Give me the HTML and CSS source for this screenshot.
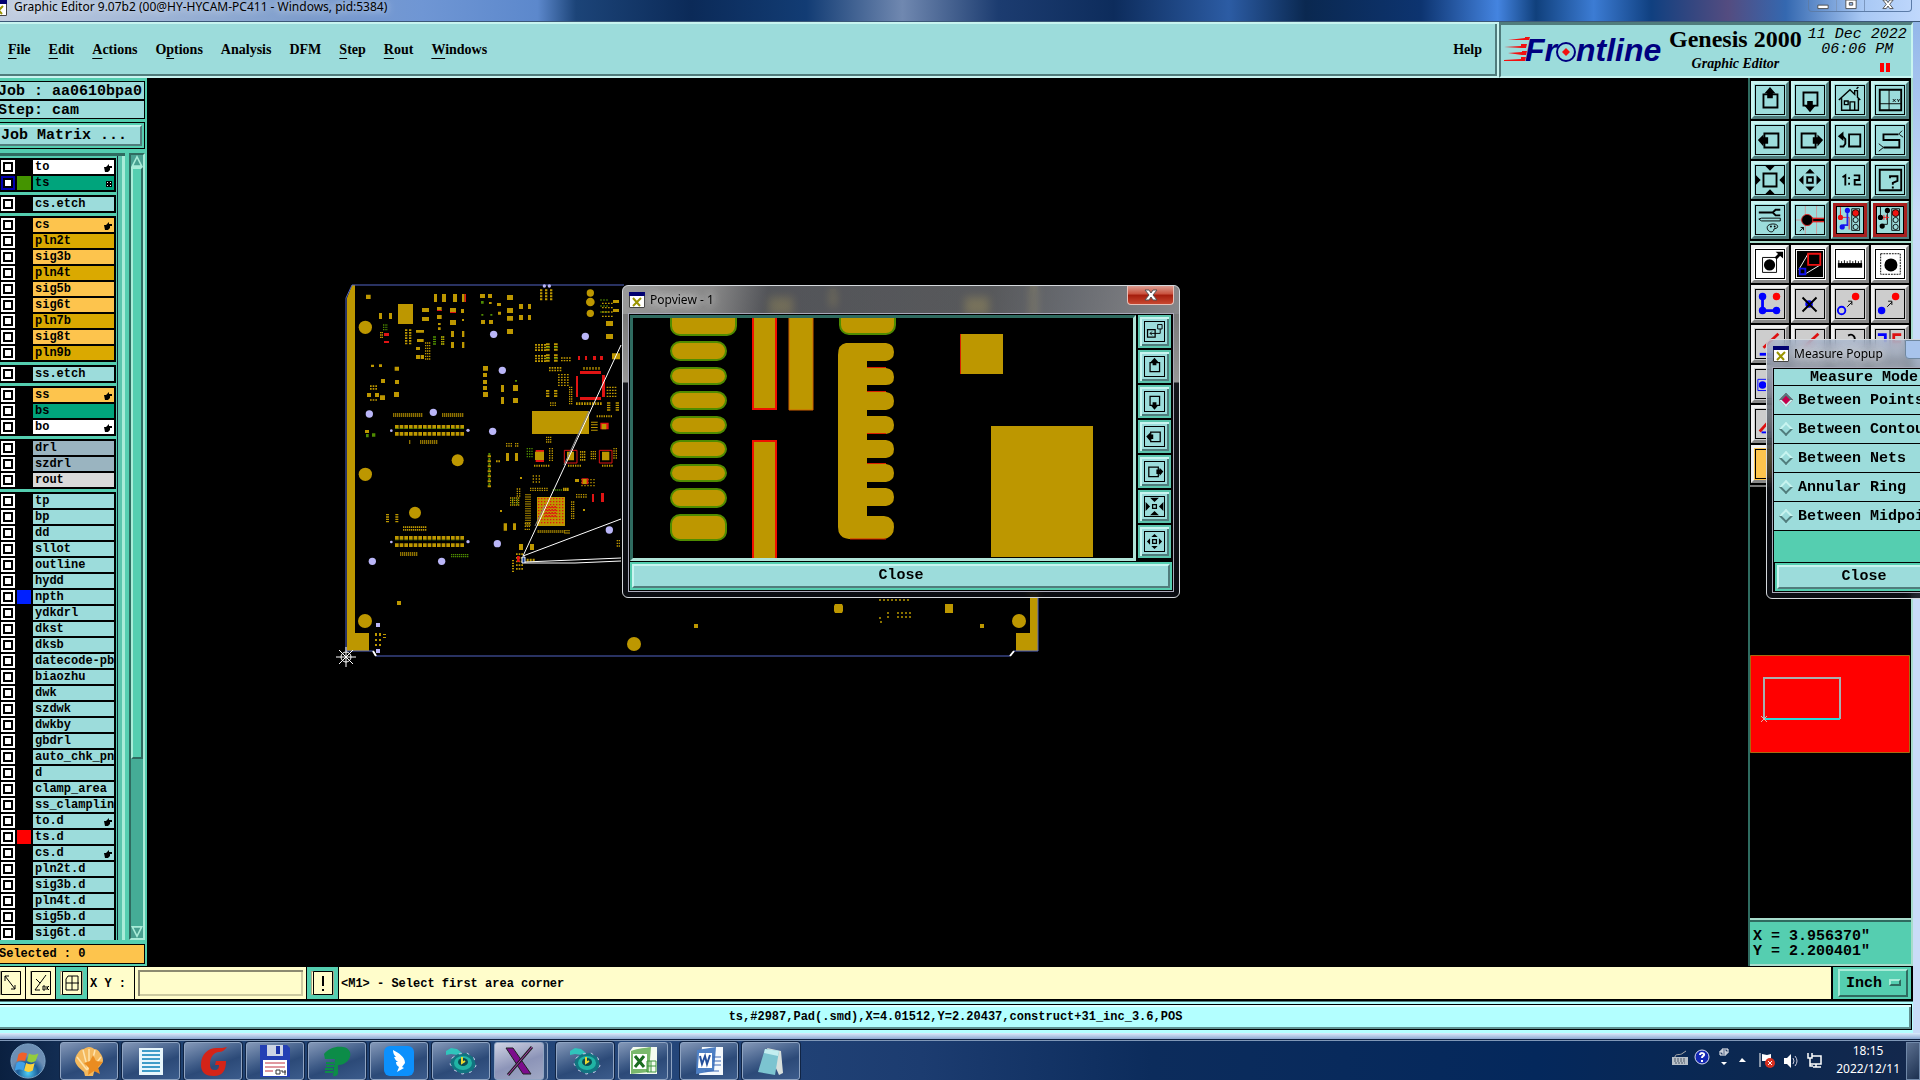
FILE: index.html
```html
<!DOCTYPE html>
<html lang="en">
<head>
    <meta charset="UTF-8">
    <meta name="viewport" content="width=device-width, initial-scale=1.0">
    <title>Graphic Editor</title>
    <link rel="stylesheet" href="styles.css">
</head>
<body>
    <!-- Shared icons -->
    <svg class="sprites" aria-hidden="true">
        <symbol id="i-up" viewBox="0 0 30 30">
            <path d="M8 9h15v14H8z" fill="none" stroke="#000" stroke-width="2"/>
            <path d="M15 1l6 7h-3v5h-6V8H9z"/>
        </symbol>
        <symbol id="i-down" viewBox="0 0 30 30">
            <path d="M8 7h15v14H8z" fill="none" stroke="#000" stroke-width="2"/>
            <path d="M15 28l6-7h-3v-5h-6v5H9z"/>
        </symbol>
        <symbol id="i-left" viewBox="0 0 30 30">
            <path d="M9 8h15v15H9z" fill="none" stroke="#000" stroke-width="2"/>
            <path d="M2 15l6-6v3h5v7H8v3z"/>
        </symbol>
        <symbol id="i-right" viewBox="0 0 30 30">
            <path d="M6 8h15v15H6z" fill="none" stroke="#000" stroke-width="2"/>
            <path d="M29 15l-6-6v3h-5v7h5v3z"/>
        </symbol>
        <symbol id="i-zoomin" viewBox="0 0 30 30">
            <path d="M8 8h14v14H8z" fill="none" stroke="#000" stroke-width="2"/>
            <path d="M10 0h10l-5 5zM10 30h10l-5-5zM0 10v10l5-5zM30 10v10l-5-5z"/>
        </symbol>
        <symbol id="i-zoomout" viewBox="0 0 30 30">
            <path d="M12 12h6v6h-6z" fill="none" stroke="#000" stroke-width="2"/>
            <path d="M10 8h10l-5-5zM10 22h10l-5 5zM8 10v10l-5-5zM22 10v10l5-5z"/>
        </symbol>
        <symbol id="i-xwin" viewBox="0 0 16 16">
            <path d="M0 0h16v16H0z" fill="#fff"/>
            <path d="M0 0h16v4H0z" fill="#000070"/>
            <path d="M.5 4v11.500h15V4" fill="none" stroke="#444"/>
            <path d="M4 6l7 8M12 6l-8 8" stroke="#9a9400" stroke-width="2"/>
        </symbol>
        <symbol id="i-genesis" viewBox="0 0 32 32">
            <path d="M1 6l5-3 6 1 5 4-4 2-7-1-5 1z" fill="#30c4bc"/>
            <path d="M7 13l6-4 9-1 7 5 2 8-5 6-9 2-8-4-4-6z" fill="#127480" stroke="#c8c8e8" stroke-dasharray="3 5"/>
            <ellipse cx="18" cy="18" rx="9" ry="7" fill="#20b4a4"/>
            <ellipse cx="18" cy="17" rx="5" ry="4" fill="#0a4a50"/>
            <path d="M17 12v6l3-2" stroke="#e8d830" stroke-width="2" fill="none"/>
        </symbol>
    </svg>

    <div class="desktop">
        <header class="titlebar">
            <svg class="title-icon"><use href="#i-xwin"/></svg>
            <span class="title-text">Graphic Editor 9.07b2 (00@HY-HYCAM-PC411 - Windows, pid:5384)</span>
            <div class="window-buttons">
                <button aria-label="Minimize"><svg viewBox="0 0 14 14"><path d="M1 6h12v4H1z"/></svg></button>
                <button aria-label="Maximize"><svg viewBox="0 0 14 14"><path d="M1 0h12v10H1zM5 3v3h4V3z" fill-rule="evenodd"/></svg></button>
                <button aria-label="Close"><svg viewBox="0 0 14 14"><path d="M1 0h4l2 3 2-3h4L9 5l4 5H9L7 7l-2 3H1l4-5z"/></svg></button>
            </div>
        </header>

        <div class="app">
            <div class="top">
                <nav class="menubar">
                    <button><u>F</u>ile</button>
                    <button><u>E</u>dit</button>
                    <button><u>A</u>ctions</button>
                    <button>O<u>p</u>tions</button>
                    <button>Analysis</button>
                    <button>DFM</button>
                    <button><u>S</u>tep</button>
                    <button><u>R</u>out</button>
                    <button><u>W</u>indows</button>
                    <button class="help">Help</button>
                </nav>
                <div class="brand">
                    <svg class="logo" viewBox="0 -8 162 44">
                        <path d="M4 3l17-2v-1h5l-1 3H20zM0 10l17-1v-2h6l-1 4H18zM4 16l14-1v-1h5l-1 4h-4zM0 23l17-1v-2h5l-1 4H0z" fill="#f21010"/>
                        <text class="logo-text" x="21" y="24">Fr<tspan x="72">ntline</tspan></text>
                        <circle cx="62" cy="15" r="9" fill="#9cdcdb" stroke="#000080" stroke-width="2"/>
                        <path d="M62 11l4 4-4 4-4-4z" fill="#f21010"/>
                    </svg>
                    <div class="product">
                        <div class="product-name">Genesis 2000</div>
                        <div class="product-sub">Graphic Editor</div>
                    </div>
                    <div class="clock">
                        <span>11 Dec 2022</span>
                        <span>06:06 PM</span>
                        <i class="pause"></i>
                    </div>
                </div>
            </div>

            <div class="main">
                <aside class="sidebar">
                    <div class="job-line">Job : aa0610bpa0</div>
                    <div class="job-line">Step: cam</div>
                    <div class="matrix"><button class="matrix-button">Job Matrix ...</button></div>
                    <div class="layers">
                        <div class="layer-list" id="layerList"></div>
                        <div class="scrollbar">
                            <button class="scroll-arrow up" aria-label="Scroll up"></button>
                            <div class="trough"><div class="thumb"></div></div>
                            <button class="scroll-arrow down" aria-label="Scroll down"></button>
                        </div>
                    </div>
                    <div class="selected">Selected : 0</div>
                </aside>

                <main class="canvas">
                    <svg class="board" viewBox="147 78 1601 888" preserveAspectRatio="xMinYMin meet">
                        <!-- Board frame -->
                        <path d="M347 651V298l5-13h3v348h14v18z" fill="#bd9700"/>
                        <path d="M1030 285h8v366h-22v-18h14z" fill="#bd9700"/>
                        <path d="M346 651V298l6-13h272M346 651h27l3 5h634l4-5h24V285" fill="none" stroke="#5264c4"/>
                        <path d="M373 651l3 5M1010 656l4-5" stroke="#fff" stroke-width="2"/>
                        <g fill="#bd9700">
                            <circle cx="365" cy="621" r="7"/><circle cx="1019" cy="621" r="7"/><circle cx="634" cy="644" r="7"/>
                            <path d="M835 604h7l1 2v5l-1 2h-7l-1-2v-5zM945 604h8v9h-8zM397 601h4v4h-4zM694 624h4v4h-4zM980 624h4v4h-4z"/>
                            <path d="M375 633h2v3h-2zM379 633h2v3h-2zM375 639h2v2h-2zM379 639h2v2h-2zM375 644h2v2h-2zM379 644h2v2h-2zM383 634h3v1h-3zM383 637h3v1h-3z"/>
                            <path d="M769 297h24v18h-24zM965 297h24v18h-24zM830 289h6v18h-6z"/>
                        </g>
                        <path d="M879 600h31M887 613h4M897 613h14M887 617h4M897 617h14M879 618h4M880 622h3" stroke="#8a7200" stroke-width="2" stroke-dasharray="2 2"/>
                        <path d="M376 623h4v4h-4zM376 649h4v4h-4z" fill="#bab6f8"/>
                        <!-- Components, in thirds of a pixel -->
                        <g id="boardPads" transform="translate(340 270) scale(.33333)"></g>
                        <!-- Nets -->
                        <path d="M621 345L523 556l98-37M525 562l96-4M525 563h50l46-2" fill="none" stroke="#fff"/>
                        <path d="M589 411l-25 54M545 505l-10 21" stroke="#888"/>
                        <path d="M522 557h3v6h-3z" fill="#123c90" stroke="#fff"/>
                        <!-- Origin -->
                        <g fill="none" stroke="#fff"><circle cx="346" cy="657" r="5"/><path d="M336 657h20M346 647v20M339 650l14 14M353 650l-14 14"/></g>
                    </svg>
                </main>

                <aside class="tools">
                    <div class="tool-grid">
                        <button aria-label="Pan up"><svg><use href="#i-up"/></svg></button>
                        <button aria-label="Pan down"><svg><use href="#i-down"/></svg></button>
                        <button aria-label="Home"><svg viewBox="0 0 30 30"><path d="M3 15l12-11 5 5V5h3v7l3 3M6 13v13h18V13M9 16h4v4H9zM15 26v-9h5v9M22 3l2-2" fill="none" stroke="#000" stroke-width="1.500"/></svg></button>
                        <button aria-label="Coordinates view"><svg viewBox="0 0 30 30"><path d="M4 4h23v22H4z" fill="none" stroke="#000" stroke-width="2"/><path d="M14 4v22M4 19h23M18 14l3 3M21 14l-3 3M23 14l1 2 2-2M24 16v1" fill="none" stroke="#000"/></svg></button>
                        <button aria-label="Pan left"><svg><use href="#i-left"/></svg></button>
                        <button aria-label="Pan right"><svg><use href="#i-right"/></svg></button>
                        <button aria-label="Previous view"><svg viewBox="0 0 30 30"><path d="M14 9h12v13H14z" fill="none" stroke="#000" stroke-width="2"/><path d="M4 22h4l2-3v-5l-3-3" fill="none" stroke="#000" stroke-width="2"/><path d="M2 11l6-5v10z"/></svg></button>
                        <button aria-label="Serpentine"><svg viewBox="0 0 30 30"><path d="M24 9H8v6h17v8H8" fill="none" stroke="#000" stroke-width="2"/><path d="M24 9l4-4M25 9l4 3M8 23l-5-4M8 23l-5 4" fill="none" stroke="#000"/></svg></button>
                        <button aria-label="Zoom in"><svg><use href="#i-zoomin"/></svg></button>
                        <button aria-label="Zoom out"><svg><use href="#i-zoomout"/></svg></button>
                        <button aria-label="Scale 1:2"><svg viewBox="0 0 30 30"><path d="M7 12l3-2v11M14 12v2M14 18v2M19 10h6v5h-5v5h7" fill="none" stroke="#000" stroke-width="2"/></svg></button>
                        <button aria-label="Help on item"><svg viewBox="0 0 30 30"><path d="M4 4h23v22H4z" fill="none" stroke="#000" stroke-width="2"/><path d="M15 13v-2h8v5l-5 2v2M18 22v2" fill="none" stroke="#000" stroke-width="2"/></svg></button>
                        <button aria-label="Setup"><svg viewBox="0 0 30 30"><path d="M3 7h15M18 7l3-3h5M18 7l3 3h5" fill="none" stroke="#000" stroke-width="2"/><path d="M3 14l3-1h20v3H6zM12 23c0-5 13-5 11 0-2 2-4 0-4 3-1 3-7 2-7-3z" fill="none" stroke="#000"/><circle cx="16" cy="22" r="1"/><circle cx="20" cy="22" r="1"/></svg></button>
                        <button aria-label="Snap"><svg viewBox="0 0 30 30"><path d="M10 0v30M22 0v30M0 15h30" stroke="#c99" fill="none"/><path d="M12 15h18" stroke="#d22" stroke-width="5"/><path d="M12 15h18" stroke="#000" stroke-width="2"/><circle cx="12" cy="15" r="6" stroke="#d22"/><path d="M4 27l4-4M5 23h3v3" stroke="#000" fill="none"/></svg></button>
                        <button class="alert" aria-label="Net check"><svg viewBox="0 0 30 30"><path d="M4 0v12h10v14M4 12V5" stroke="#e22" fill="none"/><path d="M12 5v16H7" stroke="#22e" stroke-width="2" fill="none"/><circle cx="4" cy="12" r="3" fill="#e11"/><circle cx="12" cy="4" r="3" fill="#11e"/><circle cx="6" cy="23" r="3" fill="#11e"/><path d="M17 2h9v25h-9z" fill="none" stroke="#000"/><circle cx="21.500" cy="7" r="4" fill="#e11" stroke="#000"/><circle cx="21.500" cy="15" r="3" fill="none" stroke="#000"/><circle cx="21.500" cy="23" r="3" fill="none" stroke="#000"/></svg></button>
                        <button class="alert" aria-label="Distance check"><svg viewBox="0 0 30 30"><path d="M4 0v12M12 4v16H7" stroke="#000" fill="none"/><path d="M6 12h8M8 9v6M11 9v6" stroke="#e22" fill="none"/><circle cx="4" cy="12" r="3"/><circle cx="12" cy="4" r="3"/><circle cx="6" cy="22" r="3"/><path d="M17 2h9v25h-9z" fill="none" stroke="#000"/><circle cx="21.500" cy="7" r="4" fill="#e11" stroke="#000"/><circle cx="21.500" cy="15" r="3" fill="none" stroke="#000"/><circle cx="21.500" cy="23" r="3" fill="none" stroke="#000"/></svg></button>
                    </div>
                    <div class="tool-grid gray">
                        <button class="on" aria-label="Select feature"><svg viewBox="0 0 30 30"><path d="M7 8h15v16H7z" fill="none" stroke="#000"/><circle cx="14.500" cy="16" r="6"/><path d="M21 9l5-5" stroke="#000" stroke-width="3"/><path d="M21 2h8v7z"/></svg></button>
                        <button class="on" aria-label="Measure"><svg viewBox="0 0 30 30"><path d="M1 1h28v28H1z"/><path d="M13 4L3 21M26 16l-15 9" stroke="#fff"/><path d="M13 4h13v12H13z" fill="none" stroke="#e11" stroke-width="2"/><path d="M4 20h6v6H4z" fill="none" stroke="#11e" stroke-width="2"/></svg></button>
                        <button class="on" aria-label="Ruler"><svg viewBox="0 0 30 30"><path d="M2 14h26v5H2z"/><path d="M3 11v4M6 12v3M9 11v4M12 12v3M15 11v4M18 12v3M21 11v4M24 12v3M27 11v4" stroke="#000"/></svg></button>
                        <button class="on" aria-label="Area select"><svg viewBox="0 0 30 30"><path d="M5 4h21v22H5z" fill="none" stroke="#000" stroke-dasharray="2 1"/><circle cx="16" cy="16" r="7"/></svg></button>
                        <button aria-label="Chain"><svg viewBox="0 0 30 30"><path d="M7 7v15h15" fill="none" stroke="#00f" stroke-width="3"/><g fill="#00f"><circle cx="7" cy="7" r="4"/><circle cx="7" cy="22" r="4"/><circle cx="22" cy="22" r="4"/></g><circle cx="22" cy="7" r="4" fill="#f00"/></svg></button>
                        <button aria-label="Delete"><svg viewBox="0 0 30 30"><circle cx="14" cy="15" r="4" fill="#00f"/><path d="M7 8l15 15M22 8L7 23" stroke="#000" stroke-width="2"/></svg></button>
                        <button aria-label="Copy point"><svg viewBox="0 0 30 30"><circle cx="6" cy="22" r="4" fill="none" stroke="#00f" stroke-width="2"/><circle cx="21" cy="7" r="4" fill="#f00"/><path d="M12 18l5-5M13 12h4v4" fill="none" stroke="#000"/></svg></button>
                        <button aria-label="Move point"><svg viewBox="0 0 30 30"><circle cx="6" cy="22" r="4" fill="#00f"/><circle cx="21" cy="7" r="4" fill="#f00"/><path d="M12 18l5-5M13 12h4v4" fill="none" stroke="#000"/></svg></button>
                        <button aria-label="Line"><svg viewBox="0 0 30 30"><path d="M8 19L24 4" stroke="#d11" stroke-width="3"/><path d="M4 26h16" stroke="#00f" stroke-width="3"/></svg></button>
                        <button aria-label="Angle"><svg viewBox="0 0 30 30"><path d="M8 19L24 4" stroke="#d11" stroke-width="3"/></svg></button>
                        <button aria-label="Arc"><svg viewBox="0 0 30 30"><path d="M13 6c5-3 9 2 6 7" fill="none" stroke="#000" stroke-width="2"/></svg></button>
                        <button aria-label="Mirror"><svg viewBox="0 0 30 30"><path d="M2 5h8v8" fill="none" stroke="#00f" stroke-width="3"/><path d="M27 5h-8v8h8" fill="none" stroke="#d11" stroke-width="3"/><path d="M15 0v30" stroke="#000"/></svg></button>
                        <button aria-label="Pad"><svg viewBox="0 0 30 30"><path d="M2 10h12v12H2z" fill="none" stroke="#00f"/><circle cx="7" cy="16" r="4" fill="#00f"/></svg></button>
                        <button aria-label="Surface"></button>
                        <button aria-label="Text"></button>
                        <button aria-label="Contour"></button>
                        <button aria-label="Edge"><svg viewBox="0 0 30 30"><path d="M4 23l8-9" stroke="#d11" stroke-width="3"/><path d="M6 24h10" stroke="#00f" stroke-width="2"/></svg></button>
                        <button aria-label="Fill"></button>
                        <button aria-label="Polygon"></button>
                        <button aria-label="Break"></button>
                        <button class="amber" aria-label="Mode A"><svg viewBox="0 0 30 30"></svg></button>
                        <button class="amber" aria-label="Mode B"></button>
                        <button class="amber" aria-label="Mode C"></button>
                        <button class="amber" aria-label="Mode D"></button>
                    </div>
                    <div class="overview">
                        <svg class="overview-map" viewBox="0 0 160 98">
                            <path d="M.5.500h159v97H.5z" fill="#f00" stroke="#a86a10"/>
                            <path d="M14 64V23h76v41" fill="none" stroke="#a8b0b0" stroke-width="2"/>
                            <path d="M14 64h76" stroke="#30d8d8" stroke-width="2"/>
                            <path d="M11 61l6 6M17 61l-6 6" stroke="#e0b8b0"/>
                        </svg>
                    </div>
                    <div class="coords"><div>X = 3.956370"</div><div>Y = 2.200401"</div></div>
                </aside>
            </div>

            <div class="command">
                <button class="cmd-button" aria-label="Diagonal"><svg viewBox="0 0 20 24"><path d="M.5.500h19v23H.5z"/><path d="M4 5l10 13M4 10V5h4M14 14v4h-4"/></svg></button>
                <button class="cmd-button" aria-label="Angle"><svg viewBox="0 0 20 24"><path d="M.5.500h19v23H.5z"/><path d="M15 4L4 19h5M5 8l4 4M12 15h2v4h-2zM16 15v4M18 15l-2 2 2 2"/></svg></button>
                <button class="cmd-button teal" aria-label="Grid"><svg viewBox="0 0 20 24"><path d="M.5.500h19v23H.5z"/><path d="M4 12h13M10 5v14M6 5h10v14H4V8z"/></svg></button>
                <label class="xy-label" for="xy">X Y :</label>
                <input class="xy-input" id="xy" type="text">
                <button class="cmd-button teal" aria-label="Execute"><svg viewBox="0 0 20 24"><path d="M.5.500h19v23H.5z"/><path d="M10 5v10M10 18v2" stroke-width="2"/></svg></button>
                <div class="message">&lt;M1&gt; - Select first area corner</div>
                <div class="unit">
                    <select aria-label="Unit"><option>Inch</option><option>MM</option></select>
                    <i class="unit-mark"></i>
                </div>
            </div>
            <div class="status"><div class="status-text">ts,#2987,Pad(.smd),X=4.01512,Y=2.20437,construct+31_inc_3.6,POS</div></div>
        </div>
        <div class="frame-bottom"></div>

        <footer class="taskbar">
            <button class="start" aria-label="Start">
                <svg viewBox="0 0 40 40">
                    <defs><radialGradient id="orb" cy=".85"><stop offset="0" stop-color="#4fd0f8"/><stop offset=".6" stop-color="#1c5c98"/><stop offset="1" stop-color="#6d8fb4"/></radialGradient></defs>
                    <circle cx="20" cy="20" r="18" fill="url(#orb)" stroke="#7fa6c8"/>
                    <path d="M10 13c3-3 6-2 9-1l-2 8c-3-1-6-1-9 1z" fill="#f0602a"/>
                    <path d="M21 12c3 2 6 2 10 0l-3 8c-3 2-6 2-9 0z" fill="#94cc3c"/>
                    <path d="M8 22c3-2 6-1 9 0l-2 8c-3-2-6-1-9 0z" fill="#3fa0e8"/>
                    <path d="M18 22c3 2 6 2 9 0l-2 8c-3 2-6 2-9 0z" fill="#fcd03c"/>
                </svg>
            </button>
            <button class="task" aria-label="Shell"><svg viewBox="0 0 32 32"><path d="M16 2c3 0 4 1 5 2 3 0 5 2 6 4 2 2 3 5 3 8-1 4-6 8-9 11l-1 4h-8l-1-4c-4-3-8-7-9-11 0-3 1-6 3-8 1-2 3-4 6-4 1-1 3-2 5-2z" fill="#f4b95e"/><path d="M16 4v20M10 5l5 20M22 5l-5 20M4 12l10 13M28 12L18 25" stroke="#fde3ae" stroke-width="1.500"/><path d="M20 10l3 6 7 1-5 5 2 7-6-3-6 4 1-7-5-5 6-2z" fill="#ea8c20"/></svg></button>
            <button class="task" aria-label="Document"><svg viewBox="0 0 32 32"><path d="M4 3h24v27H4z" fill="#e8f6fc"/><path d="M7 6h18M7 10h18M7 14h18M7 18h18M7 22h18M7 26h18" stroke="#3f9cc8" stroke-width="2"/></svg></button>
            <button class="task" aria-label="G tool"><svg viewBox="0 0 32 32"><path d="M30 2c-2 3-5 5-8 5-5 0-9 5-9 12 0 5 2 6 5 6 3 0 4-2 4-5h-4l1-4h10c0 10-4 15-12 15S4 28 4 20C4 9 11 3 20 3c4 0 7 0 10-1z" fill="#d42418"/></svg></button>
            <button class="task" aria-label="Save"><svg viewBox="0 0 32 32"><path d="M1 0h27l3 3v29H1z" fill="#2440b4"/><path d="M8 0h16v11H8z" fill="#ccd4e4"/><path d="M17 1h4v8h-4z" fill="#1c34a8"/><path d="M4 15h24v16H4z" fill="#fff"/><path d="M6 18h20M6 22h20M6 26h8" stroke="#c03040"/><path d="M17 25h4v4h-4zM23 25v2h4M26 25v5" fill="none" stroke="#333"/></svg></button>
            <button class="task" aria-label="P tool"><svg viewBox="0 0 32 32"><path d="M3 9c5-6 12-8 19-7 7 1 9 7 6 12-3 5-8 6-11 6v9q-2 3-5 2l2-17H4z" fill="#0c8c48"/><path d="M5 18h8M5 21h8M4 24h8M4 27h8" stroke="#0c8c48" stroke-width="2"/></svg></button>
            <button class="task" aria-label="Bird"><svg viewBox="0 0 32 32"><rect x="1" y="1" width="30" height="30" rx="6" fill="#0c90fc"/><path d="M10 5c6 3 12 7 12 13l-3 4 2 1-7 4 2-5c-2-1-3-3-3-5h2c-2-1-3-3-4-5h2c-2-2-3-4-3-7z" fill="#fff"/></svg></button>
            <button class="task" aria-label="Genesis"><svg><use href="#i-genesis"/></svg></button>
            <button class="task active stack" aria-label="X server"><svg viewBox="0 0 32 32"><path d="M3 3h7l18 26h-8z" fill="#7c0c8c" stroke="#222"/><path d="M29 2L5 30" stroke="#222" stroke-width="3"/><path d="M29 2L5 30" stroke="#a838b0"/></svg></button>
            <button class="task" aria-label="Genesis 2"><svg><use href="#i-genesis"/></svg></button>
            <button class="task stack" aria-label="Spreadsheet"><svg viewBox="0 0 32 32"><path d="M6 2h24v27H3V6z" fill="#f4fbf0"/><path d="M4 6c8-3 14-3 20-4l-2 25-18 2z" fill="#7ab86c"/><path d="M6 9h14v15H6z" fill="#fff"/><path d="M8 11l9 11M17 11L8 22" stroke="#1c6c20" stroke-width="3"/><path d="M20 16h9v11h-9zM20 21h9M24 16v11" fill="none" stroke="#3c943c"/></svg></button>
            <button class="task" aria-label="Word"><svg viewBox="0 0 32 32"><path d="M9 2h21v28H6z" fill="#f4f8fc"/><path d="M4 5l19-3-2 24-18 3z" fill="#4d7fc4"/><path d="M6 8h13v15H5z" fill="#fff"/><path d="M7 11l2 8 3-8 2 8 3-9" fill="none" stroke="#24509c" stroke-width="2"/><path d="M20 12h8M20 16h8M20 20h8M12 26h14" stroke="#3c68b4"/></svg></button>
            <button class="task" aria-label="Notes"><svg viewBox="0 0 32 32"><path d="M12 3l14 3 2 22-4 2z" fill="#d8e0dc"/><path d="M10 4l14 2-4 24-17-3z" fill="#7cc4d0"/><path d="M10 4l14 2-1 5-14-3z" fill="#c4eef0"/></svg></button>
            <div class="tray">
                <svg viewBox="0 0 150 24">
                    <path d="M0 9h16v8H0z" fill="#b8c0c8"/><path d="M2 11h12M2 13h12M3 15h10" stroke="#4c5868" stroke-dasharray="2 1"/><path d="M3 9c0-4 5-1 8-4l3-2" fill="none" stroke="#aaa"/>
                    <circle cx="30" cy="9" r="7" fill="#1428b4" stroke="#d8dcf0"/><path d="M28 7c0-3 5-2 4 0 0 1-2 1-2 3M30 12v2" fill="none" stroke="#fff" stroke-width="2"/>
                    <path d="M50 1h6v4h-6zM48 3h6v4h-6z" fill="#243c64" stroke="#fff"/><path d="M49 14h6l-3 3zM67 14h7l-4-4z" fill="#fff"/>
                    <path d="M88 5v14" stroke="#fff"/><path d="M90 6l5 1 4-1v7h-9z" fill="#fff"/><circle cx="98" cy="15" r="5" fill="#d83020"/><path d="M96 13l4 4M100 13l-4 4" stroke="#fff"/>
                    <path d="M112 10h3l4-4v14l-4-4h-3z" fill="#fff"/><path d="M121 10q2 3 0 6M123 8q4 5 0 10" stroke="#ccd" fill="none"/>
                    <path d="M140 8h9v8h-11v-3M141 19h8M144 16v3M136 5v5h4V5M138 10v8h3" fill="none" stroke="#fff" stroke-width="1.500"/>
                </svg>
                <div class="tray-clock"><span>18:15</span><span>2022/12/11</span></div>
            </div>
            <button class="show-desktop" aria-label="Show desktop"></button>
        </footer>

        <!-- Floating windows -->
        <section class="popup popview">
            <div class="popup-title">
                <svg><use href="#i-xwin"/></svg><span>Popview - 1</span>
                <button class="popup-close" aria-label="Close window"><svg viewBox="0 0 14 12"><path d="M1 1h4l2 3 2-3h4L9 6l4 5H9L7 8l-2 3H1l4-5z" fill="#fff" stroke="#555"/></svg></button>
            </div>
            <div class="popup-body">
                <div class="pop-main">
                    <svg class="pop-view" viewBox="633 318 500 240" preserveAspectRatio="xMinYMin slice">
                        <g fill="#bd9700" stroke="#4f8c00" stroke-width="2" id="popPads"></g>
                        <g fill="#bd9700">
                            <path d="M753 310h23v99h-23zM753 441h23v130h-23z" stroke="#f01000" stroke-width="2"/>
                            <path d="M789 310h24v100h-24z" stroke="#d06000"/>
                            <path d="M848 343h38q8 1 8 9t-8 9h-19v7h19q8 1 8 9t-8 8h-19v7h19q8 1 8 9t-8 9h-19v6h19q8 1 8 9t-8 9h-19v6h19q8 1 8 9t-8 9h-19v6h19q8 1 8 9t-8 9h-19v6h19q8 1 8 9t-8 9h-19v10h17q10 1 10 11t-10 12h-35q-11-1-11-12V355q0-11 8-12z"/>
                            <path d="M867 367.500h19M867 391.500h19M867 433.500h19M867 463.500h19M850 539h36" stroke="#d82000"/>
                            <path d="M960 334h43v40h-43zM991 426h102v131H991z"/>
                            <path d="M960.500 334v40" stroke="#d82000"/>
                        </g>
                    </svg>
                    <div class="pop-tools">
                        <button aria-label="New view"><svg viewBox="0 0 30 30"><path d="M4 12h12v12H4z" fill="none" stroke="#000" stroke-width="2"/><path d="M20 4h7v7h-7zM24 11v7H8M11 15l-3 3 3 3" fill="none" stroke="#000" stroke-width="1.500"/></svg></button>
                        <button aria-label="Up"><svg><use href="#i-up"/></svg></button>
                        <button aria-label="Down"><svg><use href="#i-down"/></svg></button>
                        <button aria-label="Left"><svg><use href="#i-left"/></svg></button>
                        <button aria-label="Right"><svg><use href="#i-right"/></svg></button>
                        <button aria-label="In"><svg viewBox="0 0 30 30"><path d="M12 12h6v6h-6z" fill="none" stroke="#000" stroke-width="2"/><path d="M8 1h14l-7 7zM8 29h14l-7-7zM1 8v14l7-7zM29 8v14l-7-7z"/></svg></button>
                        <button aria-label="Out"><svg><use href="#i-zoomout"/></svg></button>
                    </div>
                </div>
                <div class="close-bar"><button>Close</button></div>
            </div>
        </section>

        <section class="popup measure">
            <div class="popup-title">
                <svg><use href="#i-xwin"/></svg><span>Measure Popup</span>
                <i class="measure-ctrl"></i>
            </div>
            <div class="popup-body">
                <div class="measure-head">Measure Mode</div>
                <label><input type="radio" name="mode" checked>Between Points</label>
                <label><input type="radio" name="mode">Between Contours</label>
                <label><input type="radio" name="mode">Between Nets</label>
                <label><input type="radio" name="mode">Annular Ring</label>
                <label><input type="radio" name="mode">Between Midpoints</label>
                <div class="measure-space"></div>
                <div class="close-bar"><button>Close</button></div>
            </div>
        </section>
    </div>

    <script src="board.js"></script>
</body>
</html>
```
FILE: styles.css
```css
* {
    box-sizing: border-box;
}

body {
    margin: 0;
    background: #000;
    color: #000;
    font-family: "Liberation Mono", monospace;
    font-weight: bold;
    font-size: 12px;
    overflow: hidden;
}

button,
input,
select {
    font: inherit;
    color: inherit;
    margin: 0;
    padding: 0;
    border: 0;
    border-radius: 0;
    background: none;
}

.sprites {
    position: absolute;
    width: 0;
    height: 0;
}

.desktop {
    position: relative;
    display: flex;
    flex-direction: column;
    height: 100vh;
    overflow: hidden;
    background: linear-gradient(#8db3e8, #c9dcf8 20%, #c9dcf8);
}

/* Title bar */
.titlebar {
    display: flex;
    align-items: flex-start;
    height: 22px;
    overflow: hidden;
    border-bottom: 1px solid #3c5878;
    background: linear-gradient(90deg, #c2cee0, #7c9ccc 16%, #6f96d4 22%, #5c88cc 28%, #1c4478 30%, #0b2a58 36%, #123c74 42%, #7088b0 47%, #1c3c70 52%, #0d2c5c 58%, #2c5ca4 64%, #0a2850 68%, #0d3470 74%, #4484e0 78%, #10407c 80%, #3c7cd4 83%, #104080 86%, #544c80 90%, #3468b0 93%, #a8c8f4 97%, #c0d8fc);
}

.title-icon {
    width: 16px;
    height: 16px;
    margin-left: -9px;
}

.title-text {
    flex: 1;
    margin-left: 7px;
    font: 12px/14px "Noto Sans", sans-serif;
    text-shadow: 0 0 8px #fff;
}

.window-buttons {
    display: flex;
    height: 12px;
    margin-right: 8px;
    border: 1px solid #5c7ca8;
    border-top: 0;
    border-radius: 0 0 4px 4px;
}

.window-buttons button {
    width: 28px;
    line-height: 0;
    border-right: 1px solid #7c98c0;
}

.window-buttons button:last-child {
    width: 46px;
    border: 0;
}

.window-buttons svg {
    width: 14px;
    height: 12px;
    fill: #fff;
    stroke: #444;
}

/* Application */
.app {
    display: flex;
    flex: 1;
    flex-direction: column;
    min-height: 0;
    margin-right: 7px;
    background: #000;
}

.top {
    display: flex;
    height: 56px;
}

.menubar {
    display: flex;
    flex: 1;
    align-items: center;
    gap: 18px;
    padding: 0 15px 0 8px;
    background: #9cdcdb;
    border: 2px solid #c8f4f0;
    border-left: 0;
    box-shadow: inset -2px -2px #507c7c;
    font: bold 14px/18px "Liberation Serif", serif;
}

.menubar u {
    text-underline-offset: 4px;
}

.menubar .help {
    margin-left: auto;
}

.brand {
    display: flex;
    gap: 3px;
    width: 414px;
    padding: 0 3px;
    background: #9cdcdb;
    border: 2px solid #c8f4f0;
    border-top: 3px solid #507c7c;
    border-left: 2px solid #507c7c;
}

.logo {
    flex: none;
    width: 162px;
    height: 44px;
    margin-top: 4px;
}

.logo-text {
    font: italic bold 32px "Liberation Sans", sans-serif;
    fill: #000080;
}

.product {
    text-align: center;
    font-family: "Liberation Serif", serif;
    white-space: nowrap;
}

.product-name {
    font-size: 24px;
    line-height: 28px;
}

.product-sub {
    font-size: 14px;
    font-style: italic;
    line-height: 22px;
}

.clock {
    display: flex;
    flex: 1;
    flex-direction: column;
    align-items: center;
    padding: 2px 0 0 2px;
    font-size: 15px;
    font-style: italic;
    font-weight: normal;
    line-height: 15px;
    white-space: nowrap;
}

.pause {
    align-self: flex-end;
    width: 10px;
    height: 9px;
    margin: 6px 18px 0 0;
    border: solid #f00;
    border-width: 0 4px;
}

.main {
    display: flex;
    flex: 1;
    min-height: 0;
}

/* Left panel */
.sidebar {
    display: flex;
    flex-direction: column;
    width: 147px;
    padding: 3px 2px 2px 0;
    background: #55ceb0;
    overflow: hidden;
}

.job-line {
    height: 19px;
    background: #9cdcdb;
    border: 1px solid #000;
    border-left: 0;
    font-size: 15px;
    line-height: 19px;
    text-indent: -2px;
    white-space: nowrap;
}

.matrix {
    margin: 3px 0 4px;
    padding: 2px 2px 2px 0;
    border: 1px solid #000;
    border-left: 0;
}

.matrix-button {
    display: block;
    width: 100%;
    height: 21px;
    padding-left: 1px;
    background: #9cdcdb;
    border: 2px solid #c8f4f0;
    border-left: 0;
    border-right-color: #507c7c;
    border-bottom-color: #507c7c;
    font-size: 15px;
    line-height: 17px;
    text-align: left;
}

.layers {
    display: flex;
    flex: 1;
    gap: 4px;
    min-height: 0;
    margin-bottom: 4px;
}

.layer-list {
    flex: 1;
    padding-top: 2px;
    overflow: hidden;
    background: linear-gradient(90deg, transparent 117px, #123 117px, #123 118px, #5bc5ad 118px, #5bc5ad 122px, #a8ecd8 122px);
    border-top: 3px solid #2f6b60;
}

.layer-group {
    display: flex;
    flex-direction: column;
    gap: 2px;
    width: 116px;
    margin-bottom: 3px;
    padding: 2px 2px 2px 1px;
    background: #000;
}

.layer {
    display: flex;
    gap: 2px;
    height: 14px;
}

.layer input {
    flex: none;
    width: 14px;
    height: 14px;
    appearance: none;
    background: #fff;
    border: 2px solid #fff;
    box-shadow: inset 0 0 0 2px #000;
}

.layer input:checked {
    border-color: #0000b0;
}

.layer .swatch {
    flex: none;
    width: 14px;
}

.layer .name {
    position: relative;
    flex: 1;
    min-width: 0;
    padding-left: 2px;
    overflow: hidden;
    background: #9cdcdb;
    line-height: 14px;
    white-space: nowrap;
}

.name.white { background: #fff; }
.name.green { background: #00a47c; }
.name.amber { background: #fdc44d; }
.name.gold { background: #daa900; }
.name.steel { background: #9ab4c0; }
.name.silver { background: #dadada; }

.layer svg {
    position: absolute;
    right: 2px;
    top: 4px;
    width: 8px;
    height: 8px;
}

.scrollbar {
    display: flex;
    flex-direction: column;
    width: 16px;
    background: #45ac96;
    border: 2px solid #2f6b60;
    border-right-color: #a8ecd8;
    border-bottom-color: #a8ecd8;
}

.scroll-arrow {
    height: 12px;
    background: #48a090;
}

.scroll-arrow::before {
    content: "";
    display: block;
    width: 12px;
    height: 12px;
    background: #a8ecd8;
    clip-path: polygon(50% 0, 100% 100%, 0 100%, 50% 0, 50% 30%, 22% 85%, 78% 85%, 50% 30%);
}

.scroll-arrow.down::before {
    transform: rotate(180deg);
}

.trough {
    flex: 1;
}

.thumb {
    height: 78%;
    background: #55ceb0;
    border: 2px solid #a8ecd8;
    border-right-color: #2f6b60;
    border-bottom-color: #2f6b60;
}

.selected {
    height: 20px;
    background: #fdc44d;
    border: 1px solid #000;
    border-left: 0;
    line-height: 18px;
    text-indent: -1px;
}

/* Drawing area */
.canvas {
    flex: 1;
    min-width: 0;
    overflow: hidden;
    background: #000;
}

.board {
    display: block;
    width: 100%;
    height: 100%;
}

/* Right tools */
.tools {
    display: flex;
    flex-direction: column;
    width: 165px;
    border-left: 2px solid #2f6b60;
    border-right: 2px solid #a8dccc;
}

.tool-grid {
    display: grid;
    grid-template-columns: repeat(4, 38px);
    gap: 2px;
    padding: 3px 0 2px 1px;
    border-bottom: 2px solid #a8dccc;
}

.tool-grid.gray {
    padding-top: 2px;
    border-bottom-color: #777;
}

.tool-grid button,
.pop-tools button {
    height: 38px;
    background: #9cdcdb;
    border: 3px solid #c8f4f0;
    border-right-color: #507c7c;
    border-bottom-color: #507c7c;
    line-height: 0;
}

.tool-grid button {
    padding: 1px;
}

.tool-grid svg {
    width: 30px;
    height: 30px;
    border: 1px solid #000;
}

.tool-grid .alert {
    padding: 0;
    border-width: 2px;
    box-shadow: inset 0 0 0 3px #a82020;
}

.tool-grid .alert svg {
    width: 28px;
    height: 28px;
}

.tool-grid.gray button {
    background: #cdcdcd;
    border-color: #f0f0f0 #888 #888 #f0f0f0;
}

.tool-grid.gray .on {
    background: #fff;
}

.tool-grid.gray .amber {
    background: #fdc44d;
}

.overview {
    display: flex;
    flex: 1;
    align-items: center;
}

.overview-map {
    width: 160px;
    height: 98px;
}

.coords {
    height: 46px;
    padding: 7px 0 0 3px;
    background: #55ceb0;
    border-top: 2px solid #2f6b60;
    border-bottom: 2px solid #a8dccc;
    box-shadow: 0 -2px #a8dccc;
    font-size: 15px;
    line-height: 15px;
}

/* Command line */
.command {
    display: flex;
    gap: 1px;
    height: 35px;
    padding: 1px 2px 2px 0;
}

.cmd-button {
    width: 29px;
    background: #fffdcb;
    border: 4px solid #fffdcb;
    box-shadow: inset 0 0 0 1px #aaa888;
    line-height: 0;
}

.cmd-button:first-child {
    width: 25px;
    border-left: 0;
}

.cmd-button.teal {
    width: 31px;
    border-color: #55ceb0;
}

.cmd-button svg {
    width: 20px;
    height: 24px;
    fill: none;
    stroke: #000;
}

.xy-label {
    width: 46px;
    padding-left: 2px;
    background: #fffdcb;
    line-height: 34px;
}

.xy-input {
    width: 171px;
    padding-left: 4px;
    background: #fffdcb;
    border: 3px solid #fffdcb;
    box-shadow: inset 2px 2px #8c8a70, inset -2px -2px #cccaa0;
}

.message {
    flex: 1;
    padding-left: 2px;
    background: #fffdcb;
    line-height: 34px;
}

.unit {
    position: relative;
    width: 78px;
    margin-left: 1px;
    padding: 2px 3px 2px 5px;
    background: #55ceb0;
}

.unit select {
    width: 100%;
    height: 28px;
    padding-left: 6px;
    appearance: none;
    border: 2px solid #a8ecd8;
    border-right-color: #2f6b60;
    border-bottom-color: #2f6b60;
    font-size: 15px;
}

.unit-mark {
    position: absolute;
    right: 10px;
    top: 12px;
    width: 12px;
    height: 7px;
    border: 2px solid #a8ecd8;
    border-right-color: #2f6b60;
    border-bottom-color: #2f6b60;
}

.status {
    height: 32px;
    padding: 2px 1px 4px 0;
    background: #b3ffff;
    border-top: 1px solid #507c7c;
}

.status-text {
    height: 26px;
    border: 1px solid #000;
    border-left: 0;
    box-shadow: inset 0 2px #e0ffff, inset -2px -2px #609090;
    line-height: 25px;
    text-align: center;
}

.frame-bottom {
    height: 7px;
    background: linear-gradient(#dcecfc, #8ca8d0);
    border-bottom: 1px solid #102040;
}

/* Taskbar */
.taskbar {
    display: flex;
    gap: 4px;
    height: 40px;
    padding-top: 1px;
    background: linear-gradient(90deg, #0a2040, #1f4170 8%, #24467a 35%, #1c3c70 48%, #0c2c5c 60%, #04285c 80%, #0c2850 92%, #14284c);
    border-top: 1px solid #8098b8;
}

.start {
    width: 56px;
    line-height: 0;
}

.start svg {
    width: 38px;
    height: 38px;
}

.task {
    width: 58px;
    border: 1px solid #8fa4c2;
    border-radius: 3px;
    background: linear-gradient(160deg, #8498b8, #3f5c88 45%, #2c4a78 60%, #3c5c8c);
    box-shadow: 0 0 0 1px #102444;
    line-height: 0;
}

.task.active {
    background: linear-gradient(160deg, #d0d4e4, #8c94b8 55%, #a0a8c4);
}

.task.stack {
    width: 50px;
    margin-right: 8px;
    box-shadow: 3px 0 #304c78, 4px 0 #8fa4c2;
}

.task svg {
    width: 32px;
    height: 32px;
}

.tray {
    display: flex;
    gap: 14px;
    margin-left: auto;
}

.tray svg {
    width: 150px;
    height: 24px;
    margin-top: 6px;
}

.tray-clock {
    display: flex;
    flex-direction: column;
    align-items: center;
    margin-right: 2px;
    color: #fff;
    font: 12px/18px "Noto Sans", sans-serif;
}

.show-desktop {
    width: 14px;
    border: 1px solid #7088a8;
    background: linear-gradient(135deg, #5c7090, #1c3050);
}

/* Floating windows */
.popup {
    position: absolute;
    padding: 0 5px 5px;
    border: 1px solid #d4d8dc;
    border-radius: 6px;
    backdrop-filter: blur(4px);
}

.popup-title {
    display: flex;
    gap: 5px;
    height: 27px;
    padding: 6px 0 0 1px;
    font: 12px/15px "Noto Sans", sans-serif;
}

.popup-title span {
    text-shadow: 0 0 8px #ddd, 0 0 10px #ddd;
}

.popup-title > svg {
    width: 16px;
    height: 16px;
}

.popup-body {
    background: #000;
    border: 1px solid #aab;
    font-size: 15px;
}

.popview {
    left: 622px;
    top: 285px;
    width: 558px;
    background: linear-gradient(100deg, #a0a0a0d0, #8c8c8ccc 16%, #14182460 26%, #10141c50 66%, #60646cb0 80%, #8c8c90c0) top / 100% 28px no-repeat, linear-gradient(#a0a0a0c0 28px, #c8c8c8c0 96px, #16181ee0 97px, #0c0e14e0);
}

.popup-close {
    width: 47px;
    height: 19px;
    margin: -6px 0 0 auto;
    background: linear-gradient(#dc9c90, #c8503c 45%, #a41c0c 50%, #c84830);
    border: 1px solid #e8c0b8;
    border-top: 0;
    border-radius: 0 0 4px 4px;
    line-height: 0;
}

.popup-close svg {
    width: 14px;
    height: 12px;
}

.pop-main {
    display: flex;
    padding: 1px 2px 0 1px;
}

.pop-view {
    flex: 1;
    min-width: 0;
    height: 246px;
    background: #000;
    border: 3px solid #2f6b60;
    border-right-color: #b0e4d8;
    border-bottom-color: #b0e4d8;
}

.pop-tools {
    display: flex;
    flex-direction: column;
    gap: 2px;
    margin-left: 2px;
}

.pop-tools button {
    width: 33px;
    height: 33px;
    border-width: 2px;
    border-color: #5bc5ad;
    box-shadow: inset 2px 2px #c8f4f0, inset -2px -2px #507c7c;
}

.pop-tools svg {
    width: 21px;
    height: 21px;
    border: 1px solid #000;
}

.close-bar {
    padding: 2px;
    background: #55ceb0;
    border: 1px solid #000;
}

.close-bar button {
    display: block;
    width: 100%;
    height: 24px;
    background: #9cdcdb;
    border: 2px solid #c8f4f0;
    border-right-color: #507c7c;
    border-bottom-color: #507c7c;
    line-height: 18px;
}

.measure {
    left: 1766px;
    top: 339px;
    width: 195px;
    background: linear-gradient(#a8b8d0c0, #9098a8c0 28px, #303840c0 100px, #0c0e14e0 150px);
}

.measure-ctrl {
    flex: none;
    width: 50px;
    height: 19px;
    margin: -6px 0 0 auto;
    border: 1px solid #7088a0;
    border-radius: 0 0 4px 4px;
    background: #a8c4ec;
}

.measure .popup-title span {
    white-space: nowrap;
}

.measure .popup-body {
    padding: 1px 0 0 1px;
}

.measure-head {
    height: 16px;
    background: #9cdcdb;
    line-height: 18px;
    text-align: center;
}

.measure label {
    display: flex;
    gap: 7px;
    align-items: center;
    height: 28px;
    margin-top: 1px;
    padding-left: 7px;
    overflow: hidden;
    background: #9cdcdb;
    white-space: nowrap;
}

.measure input {
    flex: none;
    width: 10px;
    height: 10px;
    appearance: none;
    border: 2px solid #c8f4f0;
    border-right-color: #507c7c;
    border-bottom-color: #507c7c;
    transform: rotate(45deg);
}

.measure input:checked {
    background: #c4004c;
    border-color: #507c7c #c8f4f0 #c8f4f0 #507c7c;
}

.measure-space {
    height: 31px;
    margin-top: 1px;
    background: #55ceb0;
}
```
FILE: board.js
```js
// Layer list: [name, colour class, mark, swatch, checked]
const groups = [
    [['to', 'white', 'hand'], ['ts', 'green', 'grid', '#449400', true]],
    [['cs.etch']],
    [['cs', 'amber', 'hand'], ['pln2t', 'gold'], ['sig3b', 'amber'], ['pln4t', 'gold'], ['sig5b', 'amber'],
     ['sig6t', 'amber'], ['pln7b', 'gold'], ['sig8t', 'amber'], ['pln9b', 'gold']],
    [['ss.etch']],
    [['ss', 'amber', 'hand'], ['bs', 'green'], ['bo', 'white', 'hand']],
    [['drl', 'steel'], ['szdrl', 'steel'], ['rout', 'silver']],
    [['tp'], ['bp'], ['dd'], ['sllot'], ['outline'], ['hydd'], ['npth', '', '', '#0020ff'], ['ydkdrl'], ['dkst'],
     ['dksb'], ['datecode-pbc'], ['biaozhu'], ['dwk'], ['szdwk'], ['dwkby'], ['gbdrl'], ['auto_chk_pnl'], ['d'],
     ['clamp_area'], ['ss_clampline'], ['to.d', '', 'hand'], ['ts.d', '', '', '#f00'], ['cs.d', '', 'hand'],
     ['pln2t.d'], ['sig3b.d'], ['pln4t.d'], ['sig5b.d'], ['sig6t.d']]
];

const marks = {
    hand: '<svg viewBox="0 0 8 8"><path d="M0 3h2l3-3v2h3v2H6v2L4 8H1z"/></svg>',
    grid: '<svg viewBox="0 0 8 8"><path d="M2 1h6v6H2z"/><path d="M3 2h1v1H3zM6 2h1v1H6zM3 5h1v1H3zM6 5h1v1H6z" fill="#fff"/></svg>'
};

document.getElementById('layerList').innerHTML = groups.map(group =>
    '<div class="layer-group">' + group.map(([name, tone = '', mark = '', swatch = '#000', checked]) =>
        `<label class="layer"><input type="checkbox"${checked ? ' checked' : ''}>` +
        `<span class="swatch" style="background:${swatch}"></span>` +
        `<span class="name ${tone}">${name}${marks[mark] || ''}</span></label>`
    ).join('') + '</div>'
).join('');

// Board components
const GOLD = '#bd9700';
const RED = '#e01414';
const GREEN = '#4f8c00';
const LILAC = '#bab6f8';
let out = '';

function rects(color, list) {
    out += `<path fill="${color}" d="${list.map(([x, y, w, h]) => `M${x} ${y}h${w}v${h}h${-w}z`).join('')}"/>`;
}

function grid(color, x, y, nx, ny, dx, dy, w, h) {
    const list = [];
    for (let i = 0; i < nx; i++) {
        for (let j = 0; j < ny; j++) list.push([x + i * dx, y + j * dy, w, h]);
    }
    rects(color, list);
}

function dots(color, list) {
    list.forEach(([x, y, r]) => { out += `<circle cx="${x}" cy="${y}" r="${r}" fill="${color}"/>`; });
}

rects(GOLD, [
    [78, 74, 14, 13], [174, 102, 45, 60], [282, 72, 9, 24], [306, 72, 12, 24], [339, 72, 12, 24], [366, 72, 8, 24],
    [117, 129, 9, 18], [147, 129, 9, 18], [246, 114, 21, 12], [246, 141, 21, 12], [291, 111, 14, 12], [291, 135, 14, 12],
    [330, 114, 18, 15], [330, 150, 18, 15], [363, 117, 9, 12], [366, 147, 6, 6], [333, 183, 9, 18], [366, 183, 7, 18],
    [333, 216, 9, 18], [366, 216, 7, 18], [420, 72, 15, 12], [444, 72, 12, 12], [447, 96, 8, 6], [471, 99, 12, 9],
    [501, 75, 18, 15], [501, 114, 18, 15], [501, 138, 18, 14], [501, 177, 18, 15], [537, 102, 12, 15], [564, 102, 9, 15],
    [537, 135, 12, 15], [564, 135, 9, 15], [423, 150, 12, 12], [447, 150, 12, 12], [474, 125, 9, 9], [798, 153, 21, 15],
    [798, 192, 21, 15], [819, 90, 18, 9], [819, 117, 18, 9], [164, 290, 13, 12], [165, 330, 12, 12], [162, 366, 15, 15],
    [123, 327, 12, 12], [120, 376, 15, 14], [93, 284, 9, 7], [117, 283, 9, 8], [81, 369, 12, 12], [105, 369, 12, 12],
    [429, 288, 15, 14], [429, 309, 12, 12], [429, 330, 12, 12], [429, 348, 12, 12], [429, 366, 15, 15], [483, 345, 9, 21],
    [519, 345, 15, 18], [483, 381, 9, 21], [519, 384, 15, 15], [576, 423, 171, 69], [498, 549, 9, 24], [525, 549, 9, 24],
    [537, 822, 12, 18], [570, 822, 12, 18], [228, 180, 24, 8], [231, 207, 20, 9], [228, 231, 12, 9], [228, 255, 12, 12],
    [242, 255, 10, 12], [294, 159, 8, 6], [294, 172, 8, 8], [75, 480, 12, 9], [540, 621, 6, 6], [480, 720, 6, 6],
    [729, 717, 6, 6], [705, 627, 12, 9], [491, 760, 10, 22], [519, 760, 9, 20], [816, 250, 24, 18]
]);
rects(GREEN, [[423, 93, 8, 8], [424, 132, 6, 5], [451, 132, 6, 5], [525, 330, 6, 5], [78, 492, 8, 10], [96, 490, 10, 10]]);
dots(GOLD, [[76, 172, 20], [353, 571, 18], [76, 613, 20], [225, 728, 18], [751, 69, 11], [751, 96, 13], [751, 130, 11]]);
dots(LILAC, [[461, 193, 11], [736, 199, 11], [487, 301, 11], [88, 432, 11], [280, 427, 11], [458, 484, 11],
    [808, 780, 11], [472, 821, 11], [97, 874, 11], [305, 874, 11], [154, 482, 4], [384, 481, 5], [154, 816, 4],
    [384, 815, 5], [613, 48, 5], [628, 48, 5]]);

// Connectors
[465, 486, 798, 820].forEach(y => grid(GOLD, 165, y, 15, 1, 14, 0, 11, 11));
grid(GREEN, 165, 475, 15, 1, 14, 0, 11, 2);
grid(GREEN, 165, 809, 15, 1, 14, 0, 11, 2);
grid(GOLD, 159, 430, 15, 2, 6, 6, 4, 4);
grid(GOLD, 306, 430, 11, 2, 6, 6, 4, 4);
grid(GOLD, 207, 511, 1, 2, 6, 6, 4, 4);
grid(GOLD, 240, 511, 9, 2, 6, 6, 4, 4);
grid(GOLD, 189, 769, 12, 2, 6, 8, 4, 5);
grid(GOLD, 180, 847, 9, 2, 6, 6, 4, 4);
grid(GREEN, 333, 852, 9, 2, 6, 6, 4, 4);

// Passives
grid(GOLD, 195, 178, 2, 6, 12, 8, 7, 5);
grid(GOLD, 255, 217, 3, 7, 6, 8, 4, 4);
grid(GREEN, 279, 199, 2, 4, 24, 7, 9, 4);
grid(GOLD, 303, 199, 2, 4, 6, 7, 4, 4);
grid(GREEN, 129, 163, 3, 3, 5, 7, 3, 4);
grid(GOLD, 120, 186, 2, 3, 5, 7, 4, 4);
grid(GOLD, 90, 346, 3, 2, 8, 8, 5, 5);
grid(GOLD, 90, 388, 3, 1, 8, 8, 5, 4);
grid(GOLD, 138, 732, 2, 4, 28, 7, 9, 4);
grid(GOLD, 600, 58, 3, 4, 15, 9, 7, 6);
grid(GREEN, 781, 88, 3, 3, 9, 18, 4, 4);
grid(GOLD, 786, 98, 4, 4, 9, 13, 5, 4);
grid(GOLD, 585, 222, 4, 3, 9, 8, 6, 5);
grid(GOLD, 618, 220, 2, 3, 24, 8, 11, 6);
grid(GREEN, 618, 231, 2, 1, 24, 8, 11, 3);
grid(GOLD, 585, 255, 4, 3, 9, 8, 6, 5);
grid(GOLD, 618, 253, 2, 3, 24, 8, 11, 6);
grid(GREEN, 618, 264, 2, 1, 24, 8, 11, 3);
grid(GOLD, 663, 262, 4, 2, 8, 8, 5, 4);
grid(GOLD, 627, 291, 5, 2, 8, 8, 5, 5);
grid(GOLD, 654, 312, 4, 5, 9, 8, 5, 4);
grid(GOLD, 687, 350, 2, 8, 6, 7, 4, 4);
grid(GOLD, 618, 360, 2, 3, 24, 8, 10, 5);
grid(GOLD, 630, 397, 3, 2, 7, 7, 4, 4);
grid(GOLD, 708, 397, 10, 1, 8, 7, 5, 8);
grid(GOLD, 730, 291, 6, 1, 9, 8, 4, 8);
grid(GOLD, 800, 350, 4, 4, 8, 9, 5, 4);
grid(GOLD, 801, 397, 2, 4, 26, 7, 10, 4);
grid(GOLD, 770, 436, 7, 1, 7, 8, 4, 6);
grid(GOLD, 753, 455, 1, 4, 8, 8, 20, 3);
grid(GOLD, 498, 519, 3, 2, 7, 7, 4, 4);
grid(GOLD, 525, 519, 2, 2, 6, 7, 4, 4);
grid(GREEN, 560, 534, 3, 4, 7, 8, 4, 4);
grid(GOLD, 618, 500, 3, 3, 6, 7, 4, 4);
grid(GOLD, 627, 534, 2, 6, 8, 7, 4, 4);
grid(GOLD, 582, 584, 7, 1, 7, 7, 4, 6);
grid(GOLD, 684, 584, 6, 1, 7, 7, 4, 6);
grid(GOLD, 786, 584, 5, 1, 7, 7, 4, 6);
grid(GOLD, 720, 543, 3, 4, 6, 8, 4, 5);
grid(GOLD, 752, 543, 3, 4, 6, 7, 4, 4);
grid(GOLD, 820, 534, 2, 5, 7, 7, 4, 4);
grid(GREEN, 445, 549, 1, 7, 8, 15, 6, 6);
grid(GOLD, 443, 556, 1, 7, 8, 15, 10, 6);
grid(GOLD, 468, 571, 2, 1, 7, 8, 5, 6);
grid(GOLD, 578, 616, 3, 3, 9, 9, 4, 4);
grid(GOLD, 570, 653, 8, 2, 7, 6, 4, 4);
grid(GREEN, 638, 658, 5, 1, 6, 6, 4, 4);
grid(GOLD, 669, 653, 3, 1, 6, 6, 5, 10);
grid(GOLD, 556, 672, 3, 14, 6, 7, 4, 4);
grid(GOLD, 510, 682, 5, 4, 6, 7, 4, 4);
grid(GREEN, 516, 686, 2, 3, 14, 7, 4, 4);
grid(GOLD, 530, 655, 2, 4, 7, 7, 4, 4);
grid(GOLD, 693, 694, 2, 8, 6, 7, 4, 4);
grid(GOLD, 708, 672, 5, 2, 7, 7, 4, 4);
grid(GOLD, 593, 780, 14, 1, 6, 7, 3, 9);
grid(GOLD, 673, 780, 3, 2, 6, 7, 4, 4);
grid(GOLD, 554, 758, 3, 3, 6, 9, 4, 4);
grid(GOLD, 516, 870, 1, 5, 6, 8, 6, 4);
grid(GOLD, 528, 850, 3, 5, 8, 11, 5, 5);
grid(GOLD, 560, 866, 3, 1, 9, 9, 6, 9);
grid(GOLD, 724, 627, 5, 3, 9, 9, 4, 4);
grid(GOLD, 830, 810, 2, 3, 6, 8, 4, 4);

// Highlighted parts
rects(RED, [
    [374, 72, 4, 24], [132, 189, 15, 9], [132, 213, 15, 6], [330, 126, 18, 3], [291, 120, 14, 3],
    [714, 258, 6, 12], [735, 258, 6, 12], [759, 258, 9, 12], [780, 258, 9, 12],
    [720, 303, 63, 9], [720, 381, 63, 9], [708, 318, 6, 63], [786, 315, 9, 66],
    [587, 540, 25, 36], [781, 458, 25, 20], [756, 672, 6, 24], [783, 669, 9, 27], [725, 625, 20, 18], [531, 858, 8, 18]
]);
rects(GOLD, [[585, 545, 27, 25], [681, 545, 21, 26], [786, 545, 22, 26], [785, 462, 14, 16], [728, 627, 12, 15], [591, 681, 84, 87]]);
out += `<path d="M673 541h38v38h-38zM778 541h38v38h-38z" fill="none" stroke="${RED}" stroke-width="3"/>`;
grid(RED, 594, 684, 9, 9, 9, 9, 4, 4);
grid(RED, 616, 708, 4, 4, 9, 9, 5, 5);

document.getElementById('boardPads').innerHTML = out;

// Pads in the magnified view
const pads = [[310, 335, 66], [342, 360, 56], [368, 384, 56], [392, 409, 56], [417, 433, 56], [441, 457, 56],
    [465, 481, 56], [489, 507, 56], [515, 540, 56]];
document.getElementById('popPads').innerHTML = pads.map(([top, bottom, width]) =>
    `<rect x="671" y="${top}" width="${width - 1}" height="${bottom - top}" rx="9"/>`
).join('') + '<rect x="840" y="310" width="55" height="24" rx="9"/>';
```
